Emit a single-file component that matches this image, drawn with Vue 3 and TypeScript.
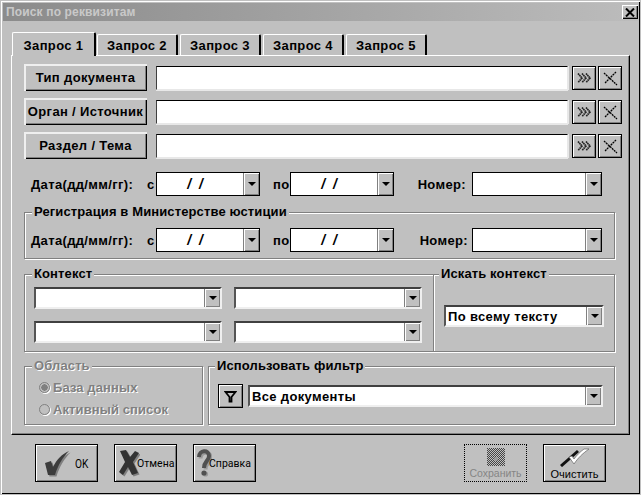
<script setup lang="ts">
const tabs: string[] = ['Запрос 1', 'Запрос 2', 'Запрос 3', 'Запрос 4', 'Запрос 5']
const docRows: string[] = ['Тип документа', 'Орган / Источник', 'Раздел / Тема']
const contextCombos: number[] = [1, 2, 3, 4]
</script>

<template>
  <div class="window">
    <div class="titlebar">
      <span class="title">Поиск по реквизитам</span>
      <span class="close">
        <svg width="10" height="9" viewBox="0 0 10 9"><path d="M1 0.5 L9 8.5 M9 0.5 L1 8.5" stroke="#000" stroke-width="2" /></svg>
      </span>
    </div>

    <div class="tabs">
      <div v-for="(t, i) in tabs" :key="t" class="tab" :class="{ active: i === 0 }">{{ t }}</div>
    </div>

    <div class="panel">
      <div v-for="r in docRows" :key="r" class="doc-row">
        <button class="doc-btn">{{ r }}</button>
        <div class="doc-input"></div>
        <button class="sq">
          <svg width="14" height="10" viewBox="0 0 14 10">
            <g fill="none" stroke="#222" stroke-width="1.7" stroke-dasharray="1.6 .4">
              <path d="M1 0.5 L5 5 L1 9.5" />
              <path d="M5 0.5 L9 5 L5 9.5" />
              <path d="M9 0.5 L13 5 L9 9.5" />
            </g>
          </svg>
        </button>
        <button class="sq">
          <svg width="15" height="15" viewBox="0 0 15 15">
            <g fill="none" stroke="#000" stroke-width="1.3" stroke-dasharray="2 .7">
              <path d="M1 2 L14 14" />
              <path d="M13 1 L2 12" />
            </g>
          </svg>
        </button>
      </div>

      <div class="date-row first">
        <span class="lbl-date">Дата(дд/мм/гг):</span>
        <span class="lbl-c">с</span>
        <div class="combo flat date"><span class="slashes">/ /</span><i class="arrow"></i></div>
        <span class="lbl-po">по</span>
        <div class="combo flat date"><span class="slashes">/ /</span><i class="arrow"></i></div>
        <span class="lbl-num">Номер:</span>
        <div class="combo flat num"><span></span><i class="arrow"></i></div>
      </div>

      <div class="group reg">
        <span class="legend">Регистрация в Министерстве юстиции</span>
        <div class="date-row inner">
          <span class="lbl-date">Дата(дд/мм/гг):</span>
          <span class="lbl-c">с</span>
          <div class="combo flat date"><span class="slashes">/ /</span><i class="arrow"></i></div>
          <span class="lbl-po">по</span>
          <div class="combo flat date"><span class="slashes">/ /</span><i class="arrow"></i></div>
          <span class="lbl-num inner-num">Номер:</span>
          <div class="combo flat num"><span></span><i class="arrow"></i></div>
        </div>
      </div>

      <div class="split context-split">
        <div class="group ctx">
          <span class="legend">Контекст</span>
          <div class="ctx-grid">
            <div v-for="c in contextCombos" :key="c" class="combo sunk ctx-combo"><span></span><i class="arrow"></i></div>
          </div>
        </div>
        <div class="group scope">
          <span class="legend scope-legend">Искать контекст</span>
          <div class="combo sunk deep scope-combo"><span class="val">По всему тексту</span><i class="arrow"></i></div>
        </div>
      </div>

      <div class="split bottom-split">
        <div class="group area">
          <span class="legend disabled">Область</span>
          <div class="radio-row"><i class="radio on"></i><span class="disabled">База данных</span></div>
          <div class="radio-row"><i class="radio"></i><span class="disabled">Активный список</span></div>
        </div>
        <div class="group filter">
          <span class="legend filter-legend">Использовать фильтр</span>
          <div class="filter-row">
            <button class="funnel">
              <svg width="13" height="13" viewBox="0 0 13 13"><path d="M1.5 2 H11.5 L7.5 7 V11.5 H5.5 V7 Z" fill="none" stroke="#000" stroke-width="1.8" /></svg>
            </button>
            <div class="combo sunk filter-combo"><span class="val">Все документы</span><i class="arrow"></i></div>
          </div>
        </div>
      </div>
    </div>

    <div class="actions">
      <button class="act row-act ok-btn">
        <svg width="27" height="27" viewBox="0 0 27 27">
          <path d="M1 13 L7 11 L9 17 C13 9 18 4 25 1 C19 7 14 15 11 25 L4 25 Z" fill="#808080" transform="translate(1.5 1.5)" />
          <path d="M1 13 L7 11 L9 17 C13 9 18 4 25 1 C19 7 14 15 11 25 L4 25 Z" fill="#3c3c3c" />
        </svg>
        <span class="ok">OK</span>
      </button>
      <button class="act row-act tight">
        <svg width="22" height="28" viewBox="0 0 22 28">
          <path d="M2 2 L8 1 L12 8 L17 2 L21 4 L15 13 L20 24 L14 26 L10 18 L5 26 L1 23 L7 13 Z" fill="#808080" transform="translate(1.5 1.5)" />
          <path d="M2 2 L8 1 L12 8 L17 2 L21 4 L15 13 L20 24 L14 26 L10 18 L5 26 L1 23 L7 13 Z" fill="#333" />
        </svg>
        <span class="cap">Отмена</span>
      </button>
      <button class="act row-act tight">
        <svg width="15" height="30" viewBox="0 0 15 30">
          <g fill="none" stroke="#999" stroke-width="4" transform="translate(1.5 1.5)">
            <path d="M2 9 C2 2 12 1 12 8 C12 13 7 13 7 20" />
          </g>
          <circle cx="8.5" cy="26" r="2.6" fill="#999" />
          <path d="M2 9 C2 2 12 1 12 8 C12 13 7 13 7 20" fill="none" stroke="#505050" stroke-width="4" />
          <circle cx="7" cy="25" r="2.6" fill="#505050" />
        </svg>
        <span class="cap">Справка</span>
      </button>
      <div class="spacer"></div>
      <button class="act col-act saved">
        <svg width="18" height="18" viewBox="0 0 18 18">
          <defs>
            <pattern id="dither" width="2" height="2" patternUnits="userSpaceOnUse">
              <rect width="2" height="2" fill="#c0c0c0" />
              <rect width="1" height="1" fill="#444" />
              <rect x="1" y="1" width="1" height="1" fill="#444" />
            </pattern>
          </defs>
          <rect width="18" height="18" fill="url(#dither)" />
          <circle cx="9" cy="11" r="2" fill="#9a9a9a" />
        </svg>
        <span class="save-text">Сохранить</span>
      </button>
      <button class="act col-act">
        <svg width="32" height="19" viewBox="0 0 32 19">
          <path d="M2 18 L19 3" stroke="#111" stroke-width="3" fill="none" />
          <path d="M10 9 L15 16 C19 10 23 6 30 1 L25 1 C21 4 18 7 15 11 L13 8 Z" fill="#fff" stroke="#666" stroke-width=".7" />
        </svg>
        <span class="cap-wide">Очистить</span>
      </button>
    </div>
  </div>
</template>

<style>
html, body { margin: 0; background: #c0c0c0; }
</style>

<style scoped>
* { box-sizing: border-box; }
.window {
  width: 641px;
  height: 495px;
  padding: 3px;
  overflow: hidden;
  background: #c0c0c0;
  color: #000;
  font: bold 13px "Liberation Sans", Arial, sans-serif;
  letter-spacing: 0.35px;
  box-shadow: inset 0 0 0 1px #c0c0c0, inset 2px 2px 0 #fff, inset -2px -2px 0 #000;
}
button { font: inherit; letter-spacing: inherit; color: inherit; padding: 0; margin: 0; }
.titlebar {
  height: 18px;
  display: flex;
  align-items: center;
  justify-content: space-between;
  padding: 0 0 0 3px;
  background: linear-gradient(90deg, #8b8b8b, #bcbcbc);
}
.title { color: #c9c9c9; font-size: 12px; letter-spacing: 0.15px; }
.close {
  width: 16px;
  height: 14px;
  display: flex;
  align-items: center;
  justify-content: center;
  background: #c0c0c0;
  box-shadow: inset 1px 1px 0 #fff, inset -1px -1px 0 #000, inset -2px -2px 0 #808080;
}
.tabs {
  display: flex;
  align-items: flex-end;
  height: 24px;
  margin: 11px 0 0 9px;
  gap: 2px;
  position: relative;
  z-index: 1;
}
.tab {
  width: 81px;
  height: 21px;
  margin-bottom: 1px;
  display: flex;
  align-items: center;
  justify-content: center;
  border-top: 1px solid #fff;
  border-left: 1px solid #fff;
  border-right: 2px solid #000;
  border-top-left-radius: 2px;
  border-top-right-radius: 2px;
  background: #c0c0c0;
}
.tab.active {
  width: 84px;
  height: 24px;
  margin-right: -1px;
  margin-bottom: 0;
  padding-top: 1px;
}
.panel {
  margin: -1px 0 0 8px;
  width: 619px;
  height: 380px;
  padding: 8px 0 0 12px;
  border-top: 1px solid #fff;
  border-left: 1px solid #fff;
  border-right: 1px solid #000;
  border-bottom: 1px solid #000;
  box-shadow: inset -1px -1px 0 #808080;
}
.doc-row { display: flex; align-items: flex-start; height: 27px; margin-bottom: 7px; }
.doc-btn {
  width: 123px;
  height: 27px;
  margin-right: 9px;
  background: #c0c0c0;
  border: 0;
  box-shadow: inset 2px 2px 0 #efefef, inset -1px -1px 0 #000, inset -2px -2px 0 #808080;
  white-space: nowrap;
}
.doc-input {
  width: 412px;
  height: 24px;
  margin: 2px 4px 0 0;
  background: #fff;
  border-top: 1px solid #000;
  border-left: 1px solid #404040;
  border-right: 1px solid #e8e8e8;
  border-bottom: 1px solid #e8e8e8;
  box-shadow: 0 1px 0 #e8e8e8, 1px 0 0 #e8e8e8;
}
.sq {
  width: 24px;
  height: 24px;
  margin: 2px 2px 0 0;
  display: flex;
  align-items: center;
  justify-content: center;
  background: #c0c0c0;
  border: 1px solid #000;
  box-shadow: inset 1px 1px 0 #fff, inset -1px -1px 0 #808080;
}
.date-row { display: flex; align-items: center; height: 24px; padding-left: 7px; }
.date-row.first { margin-top: 13px; }
.date-row.inner { margin-left: -1px; }
.lbl-date { width: 116px; white-space: nowrap; }
.lbl-c { width: 9px; }
.lbl-po { width: 17px; margin-left: 13px; white-space: nowrap; }
.lbl-num { width: 78px; padding-right: 6px; text-align: right; white-space: nowrap; }
.lbl-num.inner-num { padding-right: 4px; }
.combo { display: flex; background: #fff; flex: none; }
.combo > span { flex: 1; min-width: 0; }
.combo .arrow {
  flex: none;
  position: relative;
  width: 16px;
  background: #c0c0c0;
  box-shadow: inset 1px 1px 0 #fff, inset -1px -1px 0 #808080;
  border-left: 1px solid #808080;
  display: block;
}
.combo .arrow::after {
  content: "";
  position: absolute;
  left: 4px;
  top: calc(50% - 2px);
  border: 4px solid transparent;
  border-top: 4px solid #000;
  border-bottom: 0;
}
.combo.flat { height: 24px; border: 1px solid #000; }
.combo.date { width: 104px; }
.combo.num { width: 130px; }
.slashes {
  display: flex;
  align-items: center;
  justify-content: center;
  font: italic bold 14px "Liberation Sans", Arial, sans-serif;
  letter-spacing: 2px;
  padding-right: 8px;
}
.combo.sunk {
  height: 22px;
  border-top: 2px solid #404040;
  border-left: 2px solid #555;
  border-right: 2px solid #efefef;
  border-bottom: 2px solid #efefef;
}
.val { display: flex; align-items: center; padding-left: 2px; }
.group {
  position: relative;
  border: 1px solid #808080;
  box-shadow: inset 1px 1px 0 #fff, 1px 1px 0 #fff;
}
.legend {
  position: absolute;
  top: -8px;
  left: 7px;
  padding: 0 2px;
  background: #c0c0c0;
  line-height: 14px;
  white-space: nowrap;
  letter-spacing: 0.12px;
}
.scope-legend { left: 5px; }
.filter-legend { left: 6px; }
.disabled { color: #808080; text-shadow: 1px 1px 0 #fff; }
.group.reg { width: 591px; height: 47px; margin-top: 16px; padding-top: 15px; }
.split { display: flex; width: 591px; }
.context-split { margin-top: 15px; height: 78px; }
.bottom-split { margin-top: 14px; height: 59px; gap: 5px; }
.group.ctx { width: 409px; border-right: 0; padding: 12px 0 0 9px; }
.ctx-grid { display: grid; grid-template-columns: 188px 188px; gap: 12px; }
.group.scope { width: 182px; padding: 30px 0 0 10px; }
.scope-combo { width: 160px; }
.group.area { width: 179px; padding: 12px 0 0 14px; }
.radio-row { display: flex; align-items: center; gap: 3px; height: 16px; margin-bottom: 6px; white-space: nowrap; letter-spacing: 0.1px; }
.radio {
  display: block;
  flex: none;
  width: 11px;
  height: 11px;
  border-radius: 50%;
  border: 1px solid #808080;
  box-shadow: 1px 1px 0 #fff;
}
.radio.on { background: radial-gradient(circle, #808080 0 3px, #c0c0c0 3.4px); }
.group.filter { width: 407px; padding: 17px 0 0 9px; }
.filter-row { display: flex; align-items: flex-start; gap: 5px; }
.funnel {
  width: 25px;
  height: 24px;
  display: flex;
  align-items: center;
  justify-content: center;
  background: #c0c0c0;
  border: 1px solid #000;
  box-shadow: inset 1px 1px 0 #fff, inset -1px -1px 0 #808080;
}
.filter-combo { width: 355px; margin-top: 1px; }
.actions {
  display: flex;
  height: 38px;
  margin-top: 9px;
  padding: 0 32px;
  gap: 16px;
}
.spacer { flex: 1; margin-right: -16px; }
.act {
  width: 63px;
  height: 38px;
  background: #c0c0c0;
  border: 1px solid #000;
  box-shadow: inset 1px 1px 0 #fff, inset -1px -1px 0 #808080;
  font: 10.5px Roboto, "Liberation Sans", Arial, sans-serif;
  letter-spacing: 0;
  white-space: nowrap;
}
.row-act { display: flex; align-items: center; padding-left: 4px; }
.row-act.ok-btn { padding-left: 8px; }
.row-act.tight { padding-left: 3px; }
.cap { margin-left: -3px; }
.ok { margin-left: 4px; font-size: 13px; display: inline-block; transform: scaleX(0.78); transform-origin: left center; }
.col-act { display: flex; flex-direction: column; align-items: center; justify-content: flex-start; padding-top: 3px; gap: 1px; }
.cap-wide { font: 11px "Liberation Sans", Arial, sans-serif; }
.saved { border: 1px dotted #000; box-shadow: none; }
.save-text { color: #858585; font: 10.5px "Liberation Sans", Arial, sans-serif; }
</style>
